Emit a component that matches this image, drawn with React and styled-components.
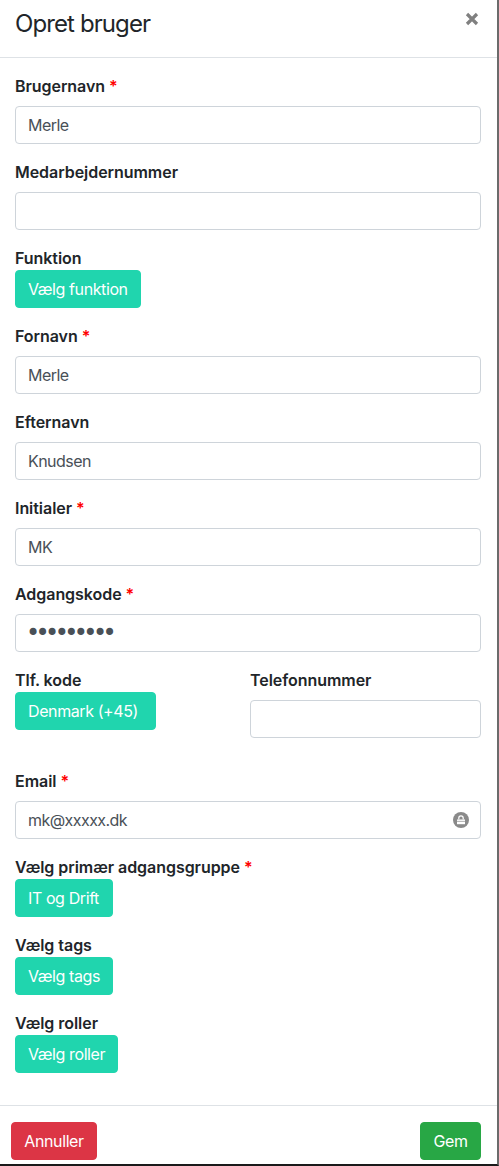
import styled, { createGlobalStyle } from "styled-components";

const GlobalStyle = createGlobalStyle`
  * {
    box-sizing: border-box;
  }

  body {
    margin: 0;
    background-color: white;
    font-family: Inter, "Liberation Sans", sans-serif;
    font-size: 16px;
    line-height: 24px;
    color: #212529;
  }
`;

const Modal = styled.div`
  width: 499px;
  height: 1166px;
  overflow: hidden;
  background-color: white;
  border-right: 2px solid #6b6b6b;
  border-bottom: 2px solid #1a1a1a;
`;

const Header = styled.header`
  height: 58px;
  padding: 6px 18px 15px 15px;
  display: flex;
  justify-content: space-between;
  border-bottom: 1px solid #dee2e6;
`;

const Title = styled.h5`
  margin: 0;
  font-size: 24px;
  font-weight: 400;
  line-height: 36px;
  letter-spacing: -0.9px;
`;

const Close = styled.button`
  width: 14px;
  height: 14px;
  margin-top: 6px;
  padding: 0;
  border: none;
  background: none;
  color: #808080;
  cursor: pointer;
`;

const Body = styled.div`
  padding: 16px 16px 16px 15px;
`;

const Group = styled.div`
  margin-bottom: 16px;
`;

const Label = styled.label`
  display: block;
  margin-bottom: ${(props) => (props.$tight ? "0" : "8px")};
  font-weight: 600;
  letter-spacing: -0.05px;
`;

const Required = styled.span`
  color: red;
`;

const InputWrap = styled.div`
  position: relative;
`;

const Input = styled.input`
  display: block;
  width: 100%;
  height: 38px;
  padding: 6px 12px;
  border: 1px solid #ced4da;
  border-radius: 4px;
  background-color: white;
  font-family: inherit;
  font-size: 16px;
  letter-spacing: -0.55px;
  color: #495057;

  &[type="password"] {
    padding-left: 10px;
    font-family: "DejaVu Sans", sans-serif;
    font-size: 24px;
    letter-spacing: -4.6px;
  }
`;

const LockBadge = styled.svg`
  position: absolute;
  top: 11px;
  right: 12px;
  width: 16px;
  height: 16px;
`;

const SelectButton = styled.button`
  display: block;
  width: ${(props) => props.$width || "auto"};
  height: 38px;
  padding: 6px 12px;
  border: 1px solid #20d5ae;
  border-radius: 4px;
  background-color: #20d5ae;
  font-family: inherit;
  font-size: 16px;
  line-height: 24px;
  letter-spacing: -0.4px;
  text-align: left;
  white-space: nowrap;
  color: white;
  cursor: pointer;
`;

const PhoneRow = styled.div`
  display: grid;
  grid-template-columns: 235px 1fr;
  margin-bottom: 15px;
`;

const Footer = styled.footer`
  padding: 16px 16px 16px 11px;
  display: flex;
  justify-content: space-between;
  border-top: 1px solid #dee2e6;
`;

const FooterButton = styled.button`
  width: ${(props) => props.$width};
  height: 38px;
  padding: 6px 12px;
  border: 1px solid ${(props) => props.$color};
  border-radius: 4px;
  background-color: ${(props) => props.$color};
  font-family: inherit;
  font-size: 16px;
  line-height: 24px;
  letter-spacing: -0.4px;
  white-space: nowrap;
  color: white;
  cursor: pointer;
`;

const TextField = ({ label, required, value, type = "text", children }) => (
  <Group>
    <Label>
      {label} {required && <Required>*</Required>}
    </Label>
    <InputWrap>
      <Input type={type} defaultValue={value} />
      {children}
    </InputWrap>
  </Group>
);

const SelectField = ({ label, required, text, width }) => (
  <Group>
    <Label $tight>
      {label} {required && <Required>*</Required>}
    </Label>
    <SelectButton type="button" $width={width}>
      {text}
    </SelectButton>
  </Group>
);

const App = () => {
  return (
    <Modal>
      <GlobalStyle />
      <Header>
        <Title>Opret bruger</Title>
        <Close type="button" aria-label="Luk">
          <svg width="14" height="14" viewBox="0 0 14 14">
            <path
              d="M2 2 L12 12 M12 2 L2 12"
              stroke="currentColor"
              strokeWidth="3.2"
              fill="none"
            />
          </svg>
        </Close>
      </Header>
      <Body>
        <TextField label="Brugernavn" required value="Merle" />
        <TextField label="Medarbejdernummer" />
        <SelectField label="Funktion" text="Vælg funktion" width="126px" />
        <TextField label="Fornavn" required value="Merle" />
        <TextField label="Efternavn" value="Knudsen" />
        <TextField label="Initialer" required value="MK" />
        <TextField label="Adgangskode" required type="password" value="123456789" />
        <PhoneRow>
          <SelectField label="Tlf. kode" text="Denmark (+45)" width="141px" />
          <TextField label="Telefonnummer" />
        </PhoneRow>
        <TextField label="Email" required value="mk@xxxxx.dk">
          <LockBadge viewBox="0 0 16 16">
            <circle cx="8" cy="8" r="8" fill="#8a8a8a" />
            <path
              d="M5.8 7.5 V6 a2.2 2.2 0 0 1 4.4 0 V7.5"
              stroke="white"
              strokeWidth="1.2"
              fill="none"
            />
            <rect x="4" y="7.5" width="8" height="1.4" fill="white" />
            <rect x="4" y="9.6" width="8" height="2.6" fill="white" />
          </LockBadge>
        </TextField>
        <SelectField
          label="Vælg primær adgangsgruppe"
          required
          text="IT og Drift"
          width="98px"
        />
        <SelectField label="Vælg tags" text="Vælg tags" width="98px" />
        <SelectField label="Vælg roller" text="Vælg roller" width="103px" />
      </Body>
      <Footer>
        <FooterButton type="button" $color="#dc3545" $width="86px">
          Annuller
        </FooterButton>
        <FooterButton type="button" $color="#28a745" $width="61px">
          Gem
        </FooterButton>
      </Footer>
    </Modal>
  );
};

export default App;
